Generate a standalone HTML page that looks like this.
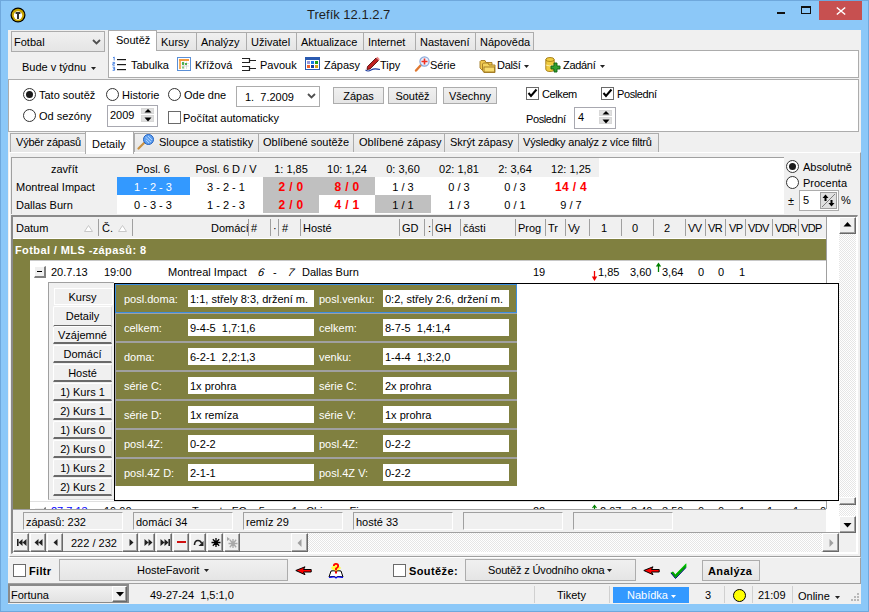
<!DOCTYPE html>
<html><head><meta charset="utf-8">
<style>
*{margin:0;padding:0;box-sizing:border-box}
html,body{width:869px;height:612px;overflow:hidden}
body{position:relative;background:#8cc8f8;font:11px "Liberation Sans",sans-serif;color:#000}
.a{position:absolute}
svg.a{overflow:visible}
.t{position:absolute;white-space:pre;line-height:13px}
.pan{position:absolute;background:#fff;border:1px solid #acacac}
.btn{position:absolute;background:linear-gradient(#f0f0f0,#e5e5e5);border:1px solid #acacac;text-align:center;line-height:16px}
.tab{position:absolute;background:linear-gradient(#f0f0f0,#e5e5e5);border:1px solid #acacac;border-bottom:none}
.tab.on{background:#fff}
.rad{position:absolute;width:13px;height:13px;border:1px solid #333;border-radius:50%;background:#fff}
.rad.on::after{content:"";position:absolute;left:2px;top:2px;width:7px;height:7px;border-radius:50%;background:#1a1a1a}
.chk{position:absolute;width:13px;height:13px;border:1px solid #6a6a6a;background:#fff}
</style></head><body>
<div class="a" style="left:0px;top:0px;width:869px;height:612px;border:1px solid #6fa8dc"></div>
<svg class="a" style="left:10px;top:7px" width="16" height="16" viewBox="0 0 16 16"><circle cx="8" cy="8" r="7.5" fill="#000"/><circle cx="8" cy="8" r="6.3" fill="#c8a400"/><circle cx="8" cy="8.5" r="4.2" fill="#fff"/><rect x="5.6" y="5" width="4.8" height="2" fill="#333"/><rect x="7" y="6" width="2" height="6" fill="#333"/></svg>
<div class="t" style="left:307px;top:7px;font-size:13px;line-height:16px;color:#1e1e1e">Trefík 12.1.2.7</div>
<div class="a" style="left:777px;top:12px;width:8px;height:2px;background:#111"></div>
<div class="a" style="left:801px;top:6px;width:10px;height:8px;border:1px solid #111;border-top-width:2px"></div>
<div class="a" style="left:819px;top:1px;width:43px;height:19px;background:#c75050"></div>
<svg class="a" style="left:836px;top:7px" width="10" height="8" viewBox="0 0 10 8"><path d="M0.8 0.5 L9.2 7.5 M9.2 0.5 L0.8 7.5" stroke="#fff" stroke-width="1.5"/></svg>
<div class="a" style="left:8px;top:30px;width:853px;height:574px;background:#f0f0f0"></div>
<div class="a" style="left:11px;top:31px;width:94px;height:21px;background:linear-gradient(#f0f0f0,#e5e5e5);border:1px solid #acacac"></div>
<div class="t" style="left:14px;top:36px;">Fotbal</div>
<svg class="a" style="left:92px;top:39px" width="9" height="6" viewBox="0 0 9 6"><path d="M1 1 L4.5 4.5 L8 1" stroke="#505050" stroke-width="1.8" fill="none"/></svg>
<div class="t" style="left:22px;top:61px;">Bude v týdnu</div>
<svg class="a" style="left:91px;top:67px" width="5" height="3" viewBox="0 0 5 3"><path d="M0 0 H5 L2.5 3 Z" fill="#222"/></svg>
<div class="pan" style="left:108px;top:50px;width:751px;height:28px"></div>
<div class="tab" style="left:156px;top:32px;width:41px;height:18px"></div>
<div class="tab" style="left:196px;top:32px;width:51px;height:18px"></div>
<div class="tab" style="left:246px;top:32px;width:51px;height:18px"></div>
<div class="tab" style="left:296px;top:32px;width:68px;height:18px"></div>
<div class="tab" style="left:363px;top:32px;width:53px;height:18px"></div>
<div class="tab" style="left:415px;top:32px;width:61px;height:18px"></div>
<div class="tab" style="left:475px;top:32px;width:59px;height:18px"></div>
<div class="tab on" style="left:108px;top:30px;width:49px;height:21px"></div>
<div class="t" style="left:116px;top:34px;">Soutěž</div>
<div class="t" style="left:161px;top:36px;">Kursy</div>
<div class="t" style="left:201px;top:36px;">Analýzy</div>
<div class="t" style="left:251px;top:36px;">Uživatel</div>
<div class="t" style="left:301px;top:36px;">Aktualizace</div>
<div class="t" style="left:368px;top:36px;">Internet</div>
<div class="t" style="left:420px;top:36px;">Nastavení</div>
<div class="t" style="left:480px;top:36px;">Nápověda</div>
<svg class="a" style="left:112px;top:56px" width="15" height="15" viewBox="0 0 15 15"><g stroke="#3a78e0" stroke-width="0.9" fill="none"><path d="M1 1.8 L2.2 1 V4.5"/><path d="M0.6 6.4 H2.6 V7.7 H0.8 V9.2 H2.8"/><path d="M0.6 11.2 H2.6 V14.3 H0.6 M1 12.8 H2.6"/></g><g fill="#1a1a1a"><rect x="5" y="3" width="9" height="1.2"/><rect x="5" y="8" width="9" height="1.2"/><rect x="5" y="13" width="9" height="1.2"/></g></svg>
<div class="t" style="left:131px;top:59px;">Tabulka</div>
<svg class="a" style="left:177px;top:57px" width="14" height="14" viewBox="0 0 14 14"><rect x="0.5" y="0.5" width="13" height="13" fill="#fff" stroke="#5a8fd6"/><rect x="2" y="2" width="10" height="2" fill="#f49a40"/><rect x="2" y="4" width="2" height="8" fill="#f4b060"/><g stroke="#c8c8c8" stroke-width="0.6"><path d="M4.5 6.5 H12 M4.5 9 H12 M7 4.5 V12 M9.5 4.5 V12"/></g><rect x="5" y="5" width="2" height="3" fill="#50b050"/><rect x="8" y="6" width="2" height="2" fill="#50b050"/><rect x="5" y="9.5" width="2" height="2" fill="#80c880"/></svg>
<div class="t" style="left:195px;top:59px;">Křížová</div>
<svg class="a" style="left:241px;top:57px" width="16" height="15" viewBox="0 0 16 15"><g stroke="#222" stroke-width="1.2" fill="none"><path d="M1 1.5 H8.5 V5.5 H1 M8.5 3.5 H15"/><path d="M1 9.5 H8.5 V13.5 H1 M8.5 11.5 H15"/></g></svg>
<div class="t" style="left:260px;top:59px;">Pavouk</div>
<svg class="a" style="left:305px;top:57px" width="15" height="13" viewBox="0 0 15 13"><rect x="0.5" y="0.5" width="14" height="12" fill="#fff" stroke="#2a5ab0"/><rect x="0.5" y="0.5" width="14" height="2.5" fill="#2a5ab0"/><rect x="2" y="4" width="3" height="3" fill="#9898d8"/><rect x="6" y="4" width="3" height="3" fill="#1a7ae8"/><rect x="10" y="4" width="3" height="3" fill="#18a018"/><rect x="2" y="8" width="3" height="3" fill="#f06030"/><rect x="6" y="8" width="3" height="3" fill="#1a40a0"/><rect x="10" y="8" width="3" height="3" fill="#d8a010"/></svg>
<div class="t" style="left:324px;top:59px;">Zápasy</div>
<svg class="a" style="left:365px;top:56px" width="16" height="16" viewBox="0 0 16 16"><path d="M2.5 10.5 L11 2 L13.5 4.5 L5 13 L2 13.5 Z" fill="#c02020" stroke="#400" stroke-width="0.8"/><path d="M11 2 L12.5 0.8 L14.8 3.2 L13.5 4.5 Z" fill="#e88"/><path d="M0.5 14 Q3 16 6 14 T15 13.5" stroke="#1a3aa0" stroke-width="1.1" fill="none"/></svg>
<div class="t" style="left:380px;top:59px;">Tipy</div>
<svg class="a" style="left:414px;top:56px" width="16" height="16" viewBox="0 0 16 16"><path d="M7 9 L2 14.5" stroke="#e07830" stroke-width="2.4" stroke-linecap="round"/><circle cx="10.5" cy="5.5" r="4.6" fill="#e8f0ff" stroke="#8aa8d8" stroke-width="1.2"/><path d="M10.5 2.5 V8.5 M7.5 5.5 H13.5" stroke="#f03020" stroke-width="1.6"/></svg>
<div class="t" style="left:430px;top:59px;">Série</div>
<svg class="a" style="left:479px;top:58px" width="17" height="15" viewBox="0 0 17 15"><path d="M1 3.5 V10 L3 12 H13 V4.5 H7 L6 2.5 H2 Z" fill="#f0c850" stroke="#a07820" stroke-width="0.9"/><path d="M3.5 6 V12.5 L5 14.5 H16 V7 H10 L9 5 H4.5 Z" fill="#f4d460" stroke="#a07820" stroke-width="0.9"/><rect x="5" y="9" width="10.5" height="5" fill="#f8dc70" stroke="#a07820" stroke-width="0.9"/></svg>
<div class="t" style="left:497px;top:59px;letter-spacing:-.3px">Další</div>
<svg class="a" style="left:524px;top:65px" width="5" height="3" viewBox="0 0 5 3"><path d="M0 0 H5 L2.5 3 Z" fill="#222"/></svg>
<svg class="a" style="left:545px;top:57px" width="17" height="16" viewBox="0 0 17 16"><path d="M0.8 2.5 V12 Q0.8 14.5 5 14.5 Q9.2 14.5 9.2 12 V2.5 Q9.2 0.5 5 0.5 Q0.8 0.5 0.8 2.5 Z" fill="#f0cc40" stroke="#a07810" stroke-width="0.9"/><path d="M0.8 2.5 Q0.8 4.5 5 4.5 Q9.2 4.5 9.2 2.5" fill="none" stroke="#a07810" stroke-width="0.8"/><path d="M0.8 8 Q5 10 9.2 8" fill="none" stroke="#fff4c0" stroke-width="0.8"/><path d="M9 6 H12 V9 H15 V12 H12 V15 H9 V12 H6 V9 H9 Z" fill="#30a030" stroke="#106010" stroke-width="0.9"/></svg>
<div class="t" style="left:563px;top:59px;letter-spacing:-.3px">Zadání</div>
<svg class="a" style="left:600px;top:65px" width="5" height="3" viewBox="0 0 5 3"><path d="M0 0 H5 L2.5 3 Z" fill="#222"/></svg>
<div class="pan" style="left:8px;top:79px;width:851px;height:53px"></div>
<div class="rad on" style="left:23px;top:88px"></div>
<div class="t" style="left:39px;top:89px;">Tato soutěž</div>
<div class="rad" style="left:106px;top:88px"></div>
<div class="t" style="left:122px;top:89px;">Historie</div>
<div class="rad" style="left:168px;top:88px"></div>
<div class="t" style="left:184px;top:89px;">Ode dne</div>
<div class="rad" style="left:23px;top:109px"></div>
<div class="t" style="left:39px;top:110px;">Od sezóny</div>
<div class="a" style="left:236px;top:86px;width:84px;height:21px;border:1px solid #acacac;background:#fff"></div>
<div class="t" style="left:245px;top:91px;">1.  7.2009</div>
<svg class="a" style="left:307px;top:93px" width="9" height="6" viewBox="0 0 9 6"><path d="M1 1 L4.5 4.5 L8 1" stroke="#505050" stroke-width="1.8" fill="none"/></svg>
<div class="a" style="left:107px;top:105px;width:51px;height:22px;border:1px solid #a8a8b0;background:#fff"></div>
<div class="t" style="left:110px;top:109px;">2009</div>
<div class="a" style="left:141px;top:108px;width:13px;height:6px;background:#e0e0e0;border:1px solid #d8d8d8"></div>
<div class="a" style="left:141px;top:115px;width:13px;height:7px;background:#e0e0e0;border:1px solid #d8d8d8"></div>
<svg class="a" style="left:144px;top:109px" width="8" height="4" viewBox="0 0 8 4"><path d="M4 0 L7.5 3.5 H0.5 Z" fill="#000"/></svg>
<svg class="a" style="left:144px;top:117px" width="8" height="5" viewBox="0 0 8 5"><path d="M0.5 0.5 H7.5 L4 4.5 Z" fill="#000"/></svg>
<div class="btn" style="left:333px;top:87px;width:51px;height:17px">Zápas</div>
<div class="btn" style="left:388px;top:87px;width:49px;height:17px">Soutěž</div>
<div class="btn" style="left:443px;top:87px;width:54px;height:17px">Všechny</div>
<div class="chk" style="left:168px;top:111px"></div>
<div class="t" style="left:183px;top:112px;">Počítat automaticky</div>
<div class="chk" style="left:526px;top:87px"></div>
<svg class="a" style="left:526px;top:87px" width="13" height="13" viewBox="0 0 13 13"><path d="M2.5 6 L5 9 L10.5 2.5" stroke="#000" stroke-width="2" fill="none"/></svg>
<div class="t" style="left:542px;top:88px;letter-spacing:-.4px">Celkem</div>
<div class="chk" style="left:601px;top:87px"></div>
<svg class="a" style="left:601px;top:87px" width="13" height="13" viewBox="0 0 13 13"><path d="M2.5 6 L5 9 L10.5 2.5" stroke="#000" stroke-width="2" fill="none"/></svg>
<div class="t" style="left:617px;top:88px;letter-spacing:-.4px">Poslední</div>
<div class="t" style="left:526px;top:113px;letter-spacing:-.4px">Poslední</div>
<div class="a" style="left:574px;top:107px;width:42px;height:22px;border:1px solid #a8a8b0;background:#fff"></div>
<div class="t" style="left:578px;top:111px;">4</div>
<div class="a" style="left:599px;top:110px;width:13px;height:6px;background:#e0e0e0;border:1px solid #d8d8d8"></div>
<div class="a" style="left:599px;top:117px;width:13px;height:7px;background:#e0e0e0;border:1px solid #d8d8d8"></div>
<svg class="a" style="left:602px;top:111px" width="8" height="4" viewBox="0 0 8 4"><path d="M4 0 L7.5 3.5 H0.5 Z" fill="#000"/></svg>
<svg class="a" style="left:602px;top:119px" width="8" height="5" viewBox="0 0 8 5"><path d="M0.5 0.5 H7.5 L4 4.5 Z" fill="#000"/></svg>
<div class="tab" style="left:10px;top:133px;width:76px;height:20px"></div>
<div class="tab" style="left:134px;top:133px;width:125px;height:20px"></div>
<div class="tab" style="left:258px;top:133px;width:96px;height:20px"></div>
<div class="tab" style="left:353px;top:133px;width:92px;height:20px"></div>
<div class="tab" style="left:444px;top:133px;width:75px;height:20px"></div>
<div class="tab" style="left:518px;top:133px;width:141px;height:20px"></div>
<div class="a" style="left:9px;top:152px;width:852px;height:405px;border:1px solid #fff;border-right-color:#a0a0a0;border-bottom-color:#a0a0a0"></div>
<div class="tab on" style="left:85px;top:131px;width:49px;height:23px"></div>
<div class="t" style="left:16px;top:136px;letter-spacing:-.2px">Výběr zápasů</div>
<div class="t" style="left:159px;top:136px;">Sloupce a statistiky</div>
<div class="t" style="left:263px;top:136px;">Oblíbené soutěže</div>
<div class="t" style="left:359px;top:136px;">Oblíbené zápasy</div>
<div class="t" style="left:450px;top:136px;">Skrýt zápasy</div>
<div class="t" style="left:523px;top:136px;letter-spacing:-.2px">Výsledky analýz z více filtrů</div>
<div class="t" style="left:92px;top:138px;">Detaily</div>
<svg class="a" style="left:137px;top:134px" width="18" height="16" viewBox="0 0 18 16"><path d="M7 9 L1.5 14.5" stroke="#c89040" stroke-width="2.2" stroke-linecap="round"/><circle cx="11.5" cy="5.5" r="5" fill="#60a0f0" stroke="#2060c0" stroke-width="1"/><path d="M8.5 3 L14 8 M9 6 L12 9 M11 2 L15 6" stroke="#c0e0ff" stroke-width="0.8"/></svg>
<div class="a" style="left:11px;top:157px;width:773px;height:57px;background:#fff;border-top:1px solid #a0a0a0;border-left:1px solid #a0a0a0"></div>
<div class="a" style="left:12px;top:158px;width:105px;height:56px;background:#f0f0f0"></div>
<div class="a" style="left:117px;top:158px;width:482px;height:19px;background:#f0f0f0"></div>
<div class="a" style="left:117px;top:177px;width:73px;height:18px;background:#3399ff"></div>
<div class="a" style="left:263px;top:177px;width:112px;height:18px;background:#c0c0c0"></div>
<div class="a" style="left:263px;top:195px;width:56px;height:18px;background:#c0c0c0"></div>
<div class="a" style="left:375px;top:195px;width:56px;height:18px;background:#c0c0c0"></div>
<div class="t" style="left:51px;top:163px;">zavřít</div>
<div class="t" style="left:16px;top:181px;">Montreal Impact</div>
<div class="t" style="left:16px;top:199px;">Dallas Burn</div>
<div class="t" style="left:113px;top:163px;width:80px;text-align:center;">Posl. 6</div>
<div class="t" style="left:186px;top:163px;width:80px;text-align:center;">Posl. 6 D / V</div>
<div class="t" style="left:251px;top:163px;width:80px;text-align:center;">1: 1,85</div>
<div class="t" style="left:307px;top:163px;width:80px;text-align:center;">10: 1,24</div>
<div class="t" style="left:363px;top:163px;width:80px;text-align:center;">0: 3,60</div>
<div class="t" style="left:419px;top:163px;width:80px;text-align:center;">02: 1,81</div>
<div class="t" style="left:475px;top:163px;width:80px;text-align:center;">2: 3,64</div>
<div class="t" style="left:531px;top:163px;width:80px;text-align:center;">12: 1,25</div>
<div class="t" style="left:113px;top:181px;width:80px;text-align:center;color:#fff">1 - 2 - 3</div>
<div class="t" style="left:186px;top:181px;width:80px;text-align:center;">3 - 2 - 1</div>
<div class="t" style="left:251px;top:181px;width:80px;text-align:center;color:#f00;font-weight:bold;font-size:12px;letter-spacing:.3px">2 / 0</div>
<div class="t" style="left:307px;top:181px;width:80px;text-align:center;color:#f00;font-weight:bold;font-size:12px;letter-spacing:.3px">8 / 0</div>
<div class="t" style="left:363px;top:181px;width:80px;text-align:center;">1 / 3</div>
<div class="t" style="left:419px;top:181px;width:80px;text-align:center;">0 / 3</div>
<div class="t" style="left:475px;top:181px;width:80px;text-align:center;">0 / 3</div>
<div class="t" style="left:531px;top:181px;width:80px;text-align:center;color:#f00;font-weight:bold;font-size:12px;letter-spacing:.3px">14 / 4</div>
<div class="t" style="left:113px;top:199px;width:80px;text-align:center;">0 - 3 - 3</div>
<div class="t" style="left:186px;top:199px;width:80px;text-align:center;">1 - 2 - 3</div>
<div class="t" style="left:251px;top:199px;width:80px;text-align:center;color:#f00;font-weight:bold;font-size:12px;letter-spacing:.3px">2 / 0</div>
<div class="t" style="left:307px;top:199px;width:80px;text-align:center;color:#f00;font-weight:bold;font-size:12px;letter-spacing:.3px">4 / 1</div>
<div class="t" style="left:363px;top:199px;width:80px;text-align:center;">1 / 1</div>
<div class="t" style="left:419px;top:199px;width:80px;text-align:center;">1 / 3</div>
<div class="t" style="left:475px;top:199px;width:80px;text-align:center;">0 / 1</div>
<div class="t" style="left:531px;top:199px;width:80px;text-align:center;">9 / 7</div>
<div class="rad on" style="left:786px;top:160px"></div>
<div class="t" style="left:803px;top:161px;">Absolutně</div>
<div class="rad" style="left:786px;top:176px"></div>
<div class="t" style="left:803px;top:177px;">Procenta</div>
<div class="t" style="left:788px;top:195px;">±</div>
<div class="a" style="left:799px;top:190px;width:40px;height:21px;border:1px solid #acacac;background:#fff"></div>
<div class="t" style="left:803px;top:194px;">5</div>
<div class="a" style="left:820px;top:192px;width:17px;height:17px;background:#e0e0e0;border:1px solid #a0a0a0"></div>
<svg class="a" style="left:821px;top:193px" width="15" height="15" viewBox="0 0 15 15"><path d="M1 14 L14 1" stroke="#808080" stroke-width="1"/><path d="M4.5 1.5 L7.5 5 H5.5 V8 H3.5 V5 H1.5 Z" fill="#000"/><path d="M10.5 13.5 L13.5 10 H11.5 V7 H9.5 V10 H7.5 Z" fill="#000"/></svg>
<div class="t" style="left:841px;top:194px;">%</div>
<div class="a" style="left:11px;top:215px;width:847px;height:339px;background:#fff;border-top:2px solid #8a8a8a;border-left:2px solid #8a8a8a;border-bottom:1px solid #fff;border-right:1px solid #fff"></div>
<div class="a" style="left:13px;top:217px;width:813px;height:21px;background:#f0f0f0"></div>
<div class="t" style="left:16px;top:222px;">Datum</div>
<div class="t" style="left:102px;top:222px;">Č.</div>
<div class="t" style="left:211px;top:222px;">Domácí</div>
<div class="t" style="left:251px;top:222px;">#</div>
<div class="t" style="left:273px;top:222px;">·</div>
<div class="t" style="left:282px;top:222px;">#</div>
<div class="t" style="left:303px;top:222px;">Hosté</div>
<div class="t" style="left:402px;top:222px;">GD</div>
<div class="t" style="left:428px;top:222px;">:</div>
<div class="t" style="left:435px;top:222px;">GH</div>
<div class="t" style="left:463px;top:222px;">části</div>
<div class="t" style="left:518px;top:222px;">Prog</div>
<div class="t" style="left:548px;top:222px;">Tr</div>
<div class="t" style="left:568px;top:222px;letter-spacing:-.7px">Vy</div>
<div class="t" style="left:601px;top:222px;">1</div>
<div class="t" style="left:632px;top:222px;">0</div>
<div class="t" style="left:664px;top:222px;">2</div>
<div class="t" style="left:688px;top:222px;letter-spacing:-.7px">VV</div>
<div class="t" style="left:708px;top:222px;letter-spacing:-.7px">VR</div>
<div class="t" style="left:729px;top:222px;letter-spacing:-.7px">VP</div>
<div class="t" style="left:748px;top:222px;letter-spacing:-.7px">VDV</div>
<div class="t" style="left:775px;top:222px;letter-spacing:-.7px">VDR</div>
<div class="t" style="left:801px;top:222px;letter-spacing:-.7px">VDP</div>
<div class="a" style="left:98px;top:219px;width:1px;height:17px;background:#a0a0a0"></div>
<div class="a" style="left:132px;top:219px;width:1px;height:17px;background:#a0a0a0"></div>
<div class="a" style="left:248px;top:219px;width:1px;height:17px;background:#a0a0a0"></div>
<div class="a" style="left:270px;top:219px;width:1px;height:17px;background:#a0a0a0"></div>
<div class="a" style="left:278px;top:219px;width:1px;height:17px;background:#a0a0a0"></div>
<div class="a" style="left:300px;top:219px;width:1px;height:17px;background:#a0a0a0"></div>
<div class="a" style="left:399px;top:219px;width:1px;height:17px;background:#a0a0a0"></div>
<div class="a" style="left:424px;top:219px;width:1px;height:17px;background:#a0a0a0"></div>
<div class="a" style="left:432px;top:219px;width:1px;height:17px;background:#a0a0a0"></div>
<div class="a" style="left:460px;top:219px;width:1px;height:17px;background:#a0a0a0"></div>
<div class="a" style="left:515px;top:219px;width:1px;height:17px;background:#a0a0a0"></div>
<div class="a" style="left:545px;top:219px;width:1px;height:17px;background:#a0a0a0"></div>
<div class="a" style="left:565px;top:219px;width:1px;height:17px;background:#a0a0a0"></div>
<div class="a" style="left:589px;top:219px;width:1px;height:17px;background:#a0a0a0"></div>
<div class="a" style="left:621px;top:219px;width:1px;height:17px;background:#a0a0a0"></div>
<div class="a" style="left:653px;top:219px;width:1px;height:17px;background:#a0a0a0"></div>
<div class="a" style="left:685px;top:219px;width:1px;height:17px;background:#a0a0a0"></div>
<div class="a" style="left:705px;top:219px;width:1px;height:17px;background:#a0a0a0"></div>
<div class="a" style="left:725px;top:219px;width:1px;height:17px;background:#a0a0a0"></div>
<div class="a" style="left:745px;top:219px;width:1px;height:17px;background:#a0a0a0"></div>
<div class="a" style="left:772px;top:219px;width:1px;height:17px;background:#a0a0a0"></div>
<div class="a" style="left:798px;top:219px;width:1px;height:17px;background:#a0a0a0"></div>
<svg class="a" style="left:84px;top:225px" width="9" height="7" viewBox="0 0 9 7"><path d="M4.5 0.5 L8.5 6.5 H0.5 Z" fill="#fff" stroke="#c8c8c8" stroke-width="1"/></svg>
<svg class="a" style="left:118px;top:225px" width="9" height="7" viewBox="0 0 9 7"><path d="M4.5 0.5 L8.5 6.5 H0.5 Z" fill="#fff" stroke="#c8c8c8" stroke-width="1"/></svg>
<div class="a" style="left:13px;top:239px;width:813px;height:270px;background:#808040"></div>
<div class="t" style="left:15px;top:244px;color:#fff;font-weight:bold;letter-spacing:.4px">Fotbal / MLS -zápasů: 8</div>
<div class="a" style="left:30px;top:260px;width:796px;height:249px;background:#fff;border-top:1px solid #c8c8c8"></div>
<div class="a" style="left:826px;top:217px;width:13px;height:292px;background:#fff;border-left:1px solid #a0a0a0"></div>
<div class="a" style="left:34px;top:266px;width:12px;height:12px;background:#f0f0f0;border-top:1px solid #fff;border-left:1px solid #fff;border-right:2px solid #808080;border-bottom:2px solid #808080"></div>
<div class="a" style="left:37px;top:271px;width:5px;height:1px;background:#000"></div>
<div class="t" style="left:51px;top:266px;">20.7.13</div>
<div class="t" style="left:104px;top:266px;">19:00</div>
<div class="t" style="left:168px;top:266px;">Montreal Impact</div>
<div class="t" style="left:258px;top:266px;font-style:italic;transform:skewX(-10deg)">6</div>
<div class="t" style="left:273px;top:266px;">-</div>
<div class="t" style="left:288px;top:266px;font-style:italic;transform:skewX(-10deg)">7</div>
<div class="t" style="left:302px;top:266px;">Dallas Burn</div>
<div class="t" style="left:533px;top:266px;">19</div>
<div class="t" style="left:598px;top:266px;">1,85</div>
<div class="t" style="left:630px;top:266px;">3,60</div>
<div class="t" style="left:662px;top:266px;">3,64</div>
<div class="t" style="left:698px;top:266px;">0</div>
<div class="t" style="left:718px;top:266px;">0</div>
<div class="t" style="left:739px;top:266px;">1</div>
<svg class="a" style="left:591px;top:270px" width="7" height="12" viewBox="0 0 7 12"><path d="M3.5 1 V8" stroke="#f00000" stroke-width="1.3"/><path d="M0.8 6.5 H6.2 L3.5 11 Z" fill="#f00000"/></svg>
<svg class="a" style="left:655px;top:262px" width="7" height="11" viewBox="0 0 7 11"><path d="M3.5 10 V3" stroke="#008000" stroke-width="1.3"/><path d="M0.8 4.5 H6.2 L3.5 0.5 Z" fill="#008000"/></svg>
<div class="a" style="left:30px;top:501px;width:796px;height:8px;overflow:hidden;border-top:1px solid #e0e0e0">
<div class="a" style="left:4px;top:5px;width:12px;height:12px;background:#f0f0f0;border-top:1px solid #fff;border-left:1px solid #fff;border-right:2px solid #808080;border-bottom:2px solid #808080"></div>
<div class="t" style="left:21px;top:3px;color:#0000ff">27.7.13</div>
<div class="t" style="left:74px;top:3px;">19:00</div>
<div class="t" style="left:162px;top:3px;">Toronto FC</div>
<div class="t" style="left:228px;top:3px;font-style:italic">5</div>
<div class="t" style="left:244px;top:3px;">-</div>
<div class="t" style="left:261px;top:3px;font-style:italic">1</div>
<div class="t" style="left:276px;top:3px;">Chicago Fire</div>
<div class="t" style="left:503px;top:3px;">22</div>
<div class="t" style="left:570px;top:3px;">2,07</div>
<div class="t" style="left:601px;top:3px;">3,40</div>
<div class="t" style="left:632px;top:3px;">3,50</div>
<div class="t" style="left:668px;top:3px;">0</div>
<div class="t" style="left:688px;top:3px;">0</div>
<div class="t" style="left:709px;top:3px;">1</div>
<div class="t" style="left:737px;top:3px;">1</div>
<div class="t" style="left:763px;top:3px;">1</div>
<div class="t" style="left:790px;top:3px;">0</div>
</div>
<svg class="a" style="left:591px;top:505px" width="7" height="5" viewBox="0 0 7 5"><path d="M3.5 5 V1 M1.5 3 L3.5 0.5 L5.5 3" stroke="#008000" stroke-width="1.2" fill="none"/></svg>
<div class="a" style="left:48px;top:282px;width:66px;height:218px;background:#f0f0f0;border-left:1px solid #a0a0a0;border-top:1px solid #a0a0a0;border-bottom:1px solid #d8d8d8"></div>
<div class="a" style="left:114px;top:283px;width:725px;height:218px;background:#fff;border:1px solid #000"></div>
<div class="a" style="left:115px;top:284px;width:402px;height:202px;background:#808040;border-left:1px solid #a0a0a0"></div>
<div class="t" style="left:124px;top:293px;color:#fff">posl.doma:</div>
<div class="a" style="left:188px;top:290px;width:126px;height:17px;background:#fff"></div>
<div class="t" style="left:190px;top:293px;">1:1, střely 8:3, držení m.</div>
<div class="t" style="left:319px;top:293px;color:#fff">posl.venku:</div>
<div class="a" style="left:383px;top:290px;width:126px;height:17px;background:#fff"></div>
<div class="t" style="left:385px;top:293px;">0:2, střely 2:6, držení m.</div>
<div class="a" style="left:115px;top:312px;width:402px;height:2px;background:#a0a0a0"></div>
<div class="t" style="left:124px;top:322px;color:#fff">celkem:</div>
<div class="a" style="left:188px;top:319px;width:126px;height:17px;background:#fff"></div>
<div class="t" style="left:190px;top:322px;">9-4-5  1,7:1,6</div>
<div class="t" style="left:319px;top:322px;color:#fff">celkem:</div>
<div class="a" style="left:383px;top:319px;width:126px;height:17px;background:#fff"></div>
<div class="t" style="left:385px;top:322px;">8-7-5  1,4:1,4</div>
<div class="a" style="left:115px;top:341px;width:402px;height:2px;background:#a0a0a0"></div>
<div class="t" style="left:124px;top:351px;color:#fff">doma:</div>
<div class="a" style="left:188px;top:348px;width:126px;height:17px;background:#fff"></div>
<div class="t" style="left:190px;top:351px;">6-2-1  2,2:1,3</div>
<div class="t" style="left:319px;top:351px;color:#fff">venku:</div>
<div class="a" style="left:383px;top:348px;width:126px;height:17px;background:#fff"></div>
<div class="t" style="left:385px;top:351px;">1-4-4  1,3:2,0</div>
<div class="a" style="left:115px;top:370px;width:402px;height:2px;background:#a0a0a0"></div>
<div class="t" style="left:124px;top:380px;color:#fff">série C:</div>
<div class="a" style="left:188px;top:377px;width:126px;height:17px;background:#fff"></div>
<div class="t" style="left:190px;top:380px;">1x prohra</div>
<div class="t" style="left:319px;top:380px;color:#fff">série C:</div>
<div class="a" style="left:383px;top:377px;width:126px;height:17px;background:#fff"></div>
<div class="t" style="left:385px;top:380px;">2x prohra</div>
<div class="a" style="left:115px;top:399px;width:402px;height:2px;background:#a0a0a0"></div>
<div class="t" style="left:124px;top:409px;color:#fff">série D:</div>
<div class="a" style="left:188px;top:406px;width:126px;height:17px;background:#fff"></div>
<div class="t" style="left:190px;top:409px;">1x remíza</div>
<div class="t" style="left:319px;top:409px;color:#fff">série V:</div>
<div class="a" style="left:383px;top:406px;width:126px;height:17px;background:#fff"></div>
<div class="t" style="left:385px;top:409px;">1x prohra</div>
<div class="a" style="left:115px;top:428px;width:402px;height:2px;background:#a0a0a0"></div>
<div class="t" style="left:124px;top:438px;color:#fff">posl.4Z:</div>
<div class="a" style="left:188px;top:435px;width:126px;height:17px;background:#fff"></div>
<div class="t" style="left:190px;top:438px;">0-2-2</div>
<div class="t" style="left:319px;top:438px;color:#fff">posl.4Z:</div>
<div class="a" style="left:383px;top:435px;width:126px;height:17px;background:#fff"></div>
<div class="t" style="left:385px;top:438px;">0-2-2</div>
<div class="a" style="left:115px;top:457px;width:402px;height:2px;background:#a0a0a0"></div>
<div class="t" style="left:124px;top:467px;color:#fff">posl.4Z D:</div>
<div class="a" style="left:188px;top:464px;width:126px;height:17px;background:#fff"></div>
<div class="t" style="left:190px;top:467px;">2-1-1</div>
<div class="t" style="left:319px;top:467px;color:#fff">posl.4Z V:</div>
<div class="a" style="left:383px;top:464px;width:126px;height:17px;background:#fff"></div>
<div class="t" style="left:385px;top:467px;">0-2-2</div>
<div class="a" style="left:115px;top:284px;width:402px;height:29px;border:1px solid #3c8ee0"></div>
<div class="a" style="left:54px;top:288px;width:59px;height:17px;border:1px solid #fff;background:#f0f0f0"></div>
<div class="t" style="left:53px;top:291px;width:59px;text-align:center">Kursy</div>
<div class="a" style="left:53px;top:306px;width:59px;height:21px;border-top:1px solid #fff;border-left:1px solid #fff;border-right:1px solid #d8d8d8;border-bottom:2px solid #6a6a6a;background:#f0f0f0;border-radius:2px 2px 0 0"></div>
<div class="t" style="left:53px;top:310px;width:59px;text-align:center">Detaily</div>
<div class="a" style="left:53px;top:326px;width:59px;height:18px;border-top:1px solid #fff;border-left:1px solid #fff;border-right:1px solid #d8d8d8;border-bottom:2px solid #6a6a6a;background:#f0f0f0;border-radius:2px 2px 0 0"></div>
<div class="t" style="left:53px;top:329px;width:59px;text-align:center">Vzájemné</div>
<div class="a" style="left:53px;top:345px;width:59px;height:18px;border-top:1px solid #fff;border-left:1px solid #fff;border-right:1px solid #d8d8d8;border-bottom:2px solid #6a6a6a;background:#f0f0f0;border-radius:2px 2px 0 0"></div>
<div class="t" style="left:53px;top:348px;width:59px;text-align:center">Domácí</div>
<div class="a" style="left:53px;top:364px;width:59px;height:18px;border-top:1px solid #fff;border-left:1px solid #fff;border-right:1px solid #d8d8d8;border-bottom:2px solid #6a6a6a;background:#f0f0f0;border-radius:2px 2px 0 0"></div>
<div class="t" style="left:53px;top:367px;width:59px;text-align:center">Hosté</div>
<div class="a" style="left:53px;top:383px;width:59px;height:18px;border-top:1px solid #fff;border-left:1px solid #fff;border-right:1px solid #d8d8d8;border-bottom:2px solid #6a6a6a;background:#f0f0f0;border-radius:2px 2px 0 0"></div>
<div class="t" style="left:53px;top:386px;width:59px;text-align:center">1) Kurs 1</div>
<div class="a" style="left:53px;top:402px;width:59px;height:18px;border-top:1px solid #fff;border-left:1px solid #fff;border-right:1px solid #d8d8d8;border-bottom:2px solid #6a6a6a;background:#f0f0f0;border-radius:2px 2px 0 0"></div>
<div class="t" style="left:53px;top:405px;width:59px;text-align:center">2) Kurs 1</div>
<div class="a" style="left:53px;top:421px;width:59px;height:18px;border-top:1px solid #fff;border-left:1px solid #fff;border-right:1px solid #d8d8d8;border-bottom:2px solid #6a6a6a;background:#f0f0f0;border-radius:2px 2px 0 0"></div>
<div class="t" style="left:53px;top:424px;width:59px;text-align:center">1) Kurs 0</div>
<div class="a" style="left:53px;top:440px;width:59px;height:18px;border-top:1px solid #fff;border-left:1px solid #fff;border-right:1px solid #d8d8d8;border-bottom:2px solid #6a6a6a;background:#f0f0f0;border-radius:2px 2px 0 0"></div>
<div class="t" style="left:53px;top:443px;width:59px;text-align:center">2) Kurs 0</div>
<div class="a" style="left:53px;top:459px;width:59px;height:18px;border-top:1px solid #fff;border-left:1px solid #fff;border-right:1px solid #d8d8d8;border-bottom:2px solid #6a6a6a;background:#f0f0f0;border-radius:2px 2px 0 0"></div>
<div class="t" style="left:53px;top:462px;width:59px;text-align:center">1) Kurs 2</div>
<div class="a" style="left:53px;top:478px;width:59px;height:18px;border-top:1px solid #fff;border-left:1px solid #fff;border-right:1px solid #d8d8d8;border-bottom:2px solid #6a6a6a;background:#f0f0f0;border-radius:2px 2px 0 0"></div>
<div class="t" style="left:53px;top:481px;width:59px;text-align:center">2) Kurs 2</div>
<div class="a" style="left:839px;top:217px;width:17px;height:316px;background:repeating-conic-gradient(#fff 0 25%,#e6e6e6 0 50%) 0 0/2px 2px"></div>
<div class="a" style="left:839px;top:217px;width:17px;height:17px;background:#f0f0f0;border-top:1px solid #fff;border-left:1px solid #fff;border-right:1px solid #696969;border-bottom:1px solid #696969;box-shadow:inset -1px -1px 0 #a0a0a0"></div>
<svg class="a" style="left:843px;top:222px" width="9" height="5" viewBox="0 0 9 5"><path d="M4.5 0 L8.5 4.5 H0.5 Z" fill="#000"/></svg>
<div class="a" style="left:839px;top:497px;width:17px;height:8px;background:#f0f0f0;border-top:1px solid #fff;border-left:1px solid #fff;border-right:1px solid #696969;border-bottom:1px solid #696969;box-shadow:inset -1px -1px 0 #a0a0a0"></div>
<div class="a" style="left:839px;top:516px;width:17px;height:17px;background:#f0f0f0;border-top:1px solid #fff;border-left:1px solid #fff;border-right:1px solid #696969;border-bottom:1px solid #696969;box-shadow:inset -1px -1px 0 #a0a0a0"></div>
<svg class="a" style="left:843px;top:523px" width="9" height="5" viewBox="0 0 9 5"><path d="M0.5 0 H8.5 L4.5 4.5 Z" fill="#000"/></svg>
<div class="a" style="left:13px;top:509px;width:813px;height:23px;background:#f0f0f0;border-top:1px solid #a0a0a0"></div>
<div class="a" style="left:23px;top:512px;width:100px;height:18px;border-top:1px solid #a0a0a0;border-left:1px solid #a0a0a0;border-right:1px solid #fff;border-bottom:1px solid #fff"></div>
<div class="t" style="left:26px;top:516px;">zápasů: 232</div>
<div class="a" style="left:133px;top:512px;width:100px;height:18px;border-top:1px solid #a0a0a0;border-left:1px solid #a0a0a0;border-right:1px solid #fff;border-bottom:1px solid #fff"></div>
<div class="t" style="left:136px;top:516px;">domácí 34</div>
<div class="a" style="left:243px;top:512px;width:100px;height:18px;border-top:1px solid #a0a0a0;border-left:1px solid #a0a0a0;border-right:1px solid #fff;border-bottom:1px solid #fff"></div>
<div class="t" style="left:246px;top:516px;">remíz 29</div>
<div class="a" style="left:353px;top:512px;width:100px;height:18px;border-top:1px solid #a0a0a0;border-left:1px solid #a0a0a0;border-right:1px solid #fff;border-bottom:1px solid #fff"></div>
<div class="t" style="left:356px;top:516px;">hosté 33</div>
<div class="a" style="left:463px;top:512px;width:100px;height:18px;border-top:1px solid #a0a0a0;border-left:1px solid #a0a0a0;border-right:1px solid #fff;border-bottom:1px solid #fff"></div>
<div class="a" style="left:573px;top:512px;width:100px;height:18px;border-top:1px solid #a0a0a0;border-left:1px solid #a0a0a0;border-right:1px solid #fff;border-bottom:1px solid #fff"></div>
<div class="a" style="left:13px;top:532px;width:826px;height:20px;background:#f0f0f0;border-top:1px solid #a0a0a0;border-bottom:1px solid #808080"></div>
<div class="a" style="left:291px;top:533px;width:548px;height:19px;background:repeating-conic-gradient(#fff 0 25%,#e6e6e6 0 50%) 0 0/2px 2px"></div>
<div class="a" style="left:291px;top:533px;width:17px;height:19px;background:#f0f0f0;border-top:1px solid #fff;border-left:1px solid #fff;border-right:1px solid #696969;border-bottom:1px solid #696969;box-shadow:inset -1px -1px 0 #a0a0a0"></div>
<svg class="a" style="left:297px;top:539px" width="5" height="8" viewBox="0 0 5 8"><path d="M4.5 0 V8 L0.5 4 Z" fill="#a0a0a0"/></svg>
<div class="a" style="left:822px;top:533px;width:17px;height:19px;background:#f0f0f0;border-top:1px solid #fff;border-left:1px solid #fff;border-right:1px solid #696969;border-bottom:1px solid #696969;box-shadow:inset -1px -1px 0 #a0a0a0"></div>
<svg class="a" style="left:829px;top:539px" width="5" height="8" viewBox="0 0 5 8"><path d="M0.5 0 V8 L4.5 4 Z" fill="#a0a0a0"/></svg>
<div class="a" style="left:839px;top:533px;width:17px;height:19px;background:#f0f0f0"></div>
<div class="a" style="left:13px;top:533px;width:16px;height:19px;background:#f0f0f0;border-top:1px solid #fff;border-left:1px solid #fff;border-right:1px solid #696969;border-bottom:1px solid #696969;box-shadow:inset -1px -1px 0 #a0a0a0"></div>
<div class="a" style="left:30px;top:533px;width:16px;height:19px;background:#f0f0f0;border-top:1px solid #fff;border-left:1px solid #fff;border-right:1px solid #696969;border-bottom:1px solid #696969;box-shadow:inset -1px -1px 0 #a0a0a0"></div>
<div class="a" style="left:47px;top:533px;width:16px;height:19px;background:#f0f0f0;border-top:1px solid #fff;border-left:1px solid #fff;border-right:1px solid #696969;border-bottom:1px solid #696969;box-shadow:inset -1px -1px 0 #a0a0a0"></div>
<div class="a" style="left:122px;top:533px;width:16px;height:19px;background:#f0f0f0;border-top:1px solid #fff;border-left:1px solid #fff;border-right:1px solid #696969;border-bottom:1px solid #696969;box-shadow:inset -1px -1px 0 #a0a0a0"></div>
<div class="a" style="left:139px;top:533px;width:16px;height:19px;background:#f0f0f0;border-top:1px solid #fff;border-left:1px solid #fff;border-right:1px solid #696969;border-bottom:1px solid #696969;box-shadow:inset -1px -1px 0 #a0a0a0"></div>
<div class="a" style="left:156px;top:533px;width:16px;height:19px;background:#f0f0f0;border-top:1px solid #fff;border-left:1px solid #fff;border-right:1px solid #696969;border-bottom:1px solid #696969;box-shadow:inset -1px -1px 0 #a0a0a0"></div>
<div class="a" style="left:173px;top:533px;width:16px;height:19px;background:#f0f0f0;border-top:1px solid #fff;border-left:1px solid #fff;border-right:1px solid #696969;border-bottom:1px solid #696969;box-shadow:inset -1px -1px 0 #a0a0a0"></div>
<div class="a" style="left:190px;top:533px;width:16px;height:19px;background:#f0f0f0;border-top:1px solid #fff;border-left:1px solid #fff;border-right:1px solid #696969;border-bottom:1px solid #696969;box-shadow:inset -1px -1px 0 #a0a0a0"></div>
<div class="a" style="left:207px;top:533px;width:16px;height:19px;background:#f0f0f0;border-top:1px solid #fff;border-left:1px solid #fff;border-right:1px solid #696969;border-bottom:1px solid #696969;box-shadow:inset -1px -1px 0 #a0a0a0"></div>
<div class="a" style="left:224px;top:533px;width:16px;height:19px;background:#f0f0f0;border-top:1px solid #fff;border-left:1px solid #fff;border-right:1px solid #696969;border-bottom:1px solid #696969;box-shadow:inset -1px -1px 0 #a0a0a0"></div>
<div class="t" style="left:71px;top:537px;">222 / 232</div>
<svg class="a" style="left:17px;top:539px" width="10" height="7" viewBox="0 0 10 7"><rect x="0" y="0" width="1.6" height="7" fill="#202020"/><path d="M5.5 0 V7 L1.5 3.5 Z M9.5 0 V7 L5.5 3.5 Z" fill="#202020"/></svg>
<svg class="a" style="left:34px;top:539px" width="9" height="7" viewBox="0 0 9 7"><path d="M4.5 0 V7 L0.5 3.5 Z M8.5 0 V7 L4.5 3.5 Z" fill="#202020"/></svg>
<svg class="a" style="left:53px;top:539px" width="5" height="7" viewBox="0 0 5 7"><path d="M4.5 0 V7 L0.5 3.5 Z" fill="#202020"/></svg>
<svg class="a" style="left:129px;top:539px" width="5" height="7" viewBox="0 0 5 7"><path d="M0.5 0 V7 L4.5 3.5 Z" fill="#202020"/></svg>
<svg class="a" style="left:144px;top:539px" width="9" height="7" viewBox="0 0 9 7"><path d="M0.5 0 V7 L4.5 3.5 Z M4.5 0 V7 L8.5 3.5 Z" fill="#202020"/></svg>
<svg class="a" style="left:160px;top:539px" width="10" height="7" viewBox="0 0 10 7"><path d="M0.5 0 V7 L4.5 3.5 Z M4.5 0 V7 L8.5 3.5 Z" fill="#202020"/><rect x="8.4" y="0" width="1.6" height="7" fill="#202020"/></svg>
<div class="a" style="left:177px;top:541px;width:9px;height:2px;background:#d01010"></div>
<svg class="a" style="left:193px;top:538px" width="11" height="9" viewBox="0 0 11 9"><path d="M1.5 7 Q1.5 2.5 5 2.5 Q7.5 2.5 8.5 5" stroke="#202020" stroke-width="1.6" fill="none"/><path d="M10.5 3 V8 H5.5 Z" fill="#202020"/></svg>
<svg class="a" style="left:211px;top:538px" width="10" height="9" viewBox="0 0 10 9"><path d="M5 0 V9 M0.5 4.5 H9.5 M1.8 1.3 L8.2 7.7 M8.2 1.3 L1.8 7.7" stroke="#000" stroke-width="1.3"/></svg>
<svg class="a" style="left:227px;top:537px" width="11" height="11" viewBox="0 0 11 11"><path d="M6 2 V11 M1.5 6.5 H10.5 M2.8 2.8 L9.2 10.2 M9.2 2.8 L2.8 10.2" stroke="#a8a8a8" stroke-width="1.3"/><path d="M0 0 L3 2 L0 4 Z" fill="#a8a8a8"/></svg>
<div class="a" style="left:8px;top:557px;width:853px;height:27px;border-top:1px solid #fff;border-right:1px solid #a0a0a0"></div>
<div class="chk" style="left:13px;top:564px"></div>
<div class="t" style="left:29px;top:565px;font-weight:bold;letter-spacing:.3px">Filtr</div>
<div class="btn" style="left:59px;top:559px;width:229px;height:22px"></div>
<div class="t" style="left:137px;top:564px;">HosteFavorit</div>
<svg class="a" style="left:204px;top:569px" width="5" height="3" viewBox="0 0 5 3"><path d="M0 0 H5 L2.5 3 Z" fill="#222"/></svg>
<svg class="a" style="left:295px;top:566px" width="17" height="10" viewBox="0 0 17 10"><path d="M0.8 4.5 L10 0.8 L8.5 3.5 H16.2 V6 H8.5 L10 8.7 Z" fill="#ff0000" stroke="#000" stroke-width="1" stroke-linejoin="round"/></svg>
<svg class="a" style="left:328px;top:562px" width="16" height="17" viewBox="0 0 16 17"><path d="M8 0.5 L13 6 L8 11 L3 6 Z" fill="#ffff40"/><path d="M1 15 L3 9 Q8 8 8 11 Q8 8 13 9 L15 15 Q8 13.5 8 16 Q8 13.5 1 15 Z" fill="#fff" stroke="#000" stroke-width="1"/><path d="M1 15.5 Q8 14 8 16.5 Q8 14 15 15.5" fill="none" stroke="#0000ff" stroke-width="1.2"/><path d="M5.8 4 Q5.8 1.8 8 1.8 Q10.2 1.8 10.2 4 Q10.2 5.5 8 6.5 V8.5" fill="none" stroke="#ff0000" stroke-width="1.8"/><rect x="7" y="9.5" width="2" height="2" fill="#ff0000"/></svg>
<div class="chk" style="left:393px;top:564px"></div>
<div class="t" style="left:409px;top:565px;font-weight:bold;letter-spacing:.4px">Soutěže:</div>
<div class="btn" style="left:465px;top:559px;width:171px;height:22px"></div>
<div class="t" style="left:488px;top:564px;letter-spacing:-.15px">Soutěž z Úvodního okna</div>
<svg class="a" style="left:607px;top:569px" width="5" height="3" viewBox="0 0 5 3"><path d="M0 0 H5 L2.5 3 Z" fill="#222"/></svg>
<svg class="a" style="left:643px;top:566px" width="17" height="10" viewBox="0 0 17 10"><path d="M0.8 4.5 L10 0.8 L8.5 3.5 H16.2 V6 H8.5 L10 8.7 Z" fill="#ff0000" stroke="#000" stroke-width="1" stroke-linejoin="round"/></svg>
<svg class="a" style="left:670px;top:563px" width="17" height="17" viewBox="0 0 17 17"><path d="M1 9.5 L5.5 15 L16 4 V0.8 L5.5 11.5 L3 8.5 Z" fill="#00a000"/><path d="M1 9.5 L5.5 15 L16 4 V0.8 L5.5 11.5" fill="none" stroke="#00d000" stroke-width="0.8"/><path d="M1 10 L5.5 15.5 L16 4.5" fill="none" stroke="#000080" stroke-width="1"/></svg>
<div class="btn" style="left:702px;top:560px;width:58px;height:21px"></div>
<div class="t" style="left:708px;top:565px;font-weight:bold;letter-spacing:.4px">Analýza</div>
<div class="a" style="left:8px;top:583px;width:853px;height:1px;background:#a0a0a0"></div>
<div class="a" style="left:8px;top:584px;width:121px;height:19px;background:linear-gradient(#f2f2f2,#e2e2e2);border:2px solid #8a8a8a;border-bottom-width:1px"></div>
<div class="t" style="left:11px;top:589px;">Fortuna</div>
<div class="a" style="left:112px;top:586px;width:15px;height:16px;background:#f0f0f0;border-top:1px solid #fff;border-left:1px solid #fff;border-right:1px solid #696969;border-bottom:1px solid #696969;box-shadow:inset -1px -1px 0 #a0a0a0"></div>
<svg class="a" style="left:116px;top:592px" width="8" height="5" viewBox="0 0 8 5"><path d="M0 0 H8 L4 4.5 Z" fill="#000"/></svg>
<div class="t" style="left:150px;top:589px;">49-27-24  1,5:1,0</div>
<div class="a" style="left:534px;top:586px;width:1px;height:17px;background:#d0d0d0"></div>
<div class="a" style="left:609px;top:586px;width:1px;height:17px;background:#d0d0d0"></div>
<div class="a" style="left:724px;top:586px;width:1px;height:17px;background:#d0d0d0"></div>
<div class="a" style="left:752px;top:586px;width:1px;height:17px;background:#d0d0d0"></div>
<div class="a" style="left:792px;top:586px;width:1px;height:17px;background:#d0d0d0"></div>
<div class="t" style="left:557px;top:589px;">Tikety</div>
<div class="a" style="left:613px;top:587px;width:76px;height:16px;background:#3399ff"></div>
<div class="t" style="left:627px;top:589px;color:#fff">Nabídka</div>
<svg class="a" style="left:671px;top:595px" width="5" height="3" viewBox="0 0 5 3"><path d="M0 0 H5 L2.5 3 Z" fill="#fff"/></svg>
<div class="t" style="left:705px;top:589px;">3</div>
<div class="a" style="left:733px;top:589px;width:13px;height:13px;border-radius:50%;background:#ffff00;border:1px solid #000"></div>
<div class="t" style="left:758px;top:589px;">21:09</div>
<div class="t" style="left:798px;top:590px;">Online</div>
<svg class="a" style="left:835px;top:596px" width="5" height="3" viewBox="0 0 5 3"><path d="M0 0 H5 L2.5 3 Z" fill="#222"/></svg>
<svg class="a" style="left:850px;top:592px" width="10" height="10" viewBox="0 0 10 10"><g fill="#b8b8b8"><rect x="7" y="1" width="2" height="2"/><rect x="4" y="4" width="2" height="2"/><rect x="7" y="4" width="2" height="2"/><rect x="1" y="7" width="2" height="2"/><rect x="4" y="7" width="2" height="2"/><rect x="7" y="7" width="2" height="2"/></g></svg>
</body></html>
